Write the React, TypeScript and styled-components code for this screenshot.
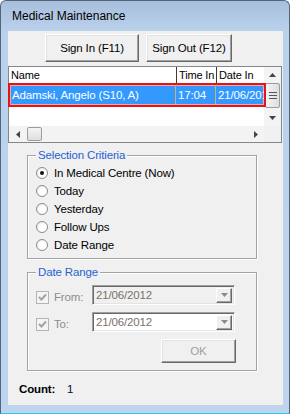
import React from 'react';
import styled, { createGlobalStyle } from 'styled-components';

// 선택 기준 라디오 목록
const CRITERIA = ['In Medical Centre (Now)', 'Today', 'Yesterday', 'Follow Ups', 'Date Range'];

const GlobalStyle = createGlobalStyle`
    html, body {
        margin: 0;
        padding: 0;
        background: #ffffff;
    }
    body {
        font-family: "Liberation Sans", Arial, sans-serif;
        font-size: 11px;
        letter-spacing: -0.15px;
        color: #000;
    }
`;

const UpArrow = () => (
    <svg width="7" height="4" viewBox="0 0 7 4">
        <path d="M0 4 L3.5 0 L7 4 Z" fill="#444" />
    </svg>
);

const DownArrow = ({ color = '#444' }: { color?: string }) => (
    <svg width="7" height="4" viewBox="0 0 7 4">
        <path d="M0 0 L7 0 L3.5 4 Z" fill={color} />
    </svg>
);

const LeftArrow = () => (
    <svg width="4" height="7" viewBox="0 0 4 7">
        <path d="M4 0 L4 7 L0 3.5 Z" fill="#444" />
    </svg>
);

const RightArrow = () => (
    <svg width="4" height="7" viewBox="0 0 4 7">
        <path d="M0 0 L4 3.5 L0 7 Z" fill="#444" />
    </svg>
);

const Grip = () => (
    <svg width="8" height="7" viewBox="0 0 8 7">
        <path d="M0 0.5 H8 M0 3.5 H8 M0 6.5 H8" stroke="#555" strokeWidth="1" />
    </svg>
);

const CheckMark = () => (
    <svg width="9" height="9" viewBox="0 0 9 9">
        <path d="M1 4 L3.5 6.5 L8 1.5" stroke="#a3a3a3" strokeWidth="2" fill="none" />
    </svg>
);

export default function App() {
    return (
        <>
            <GlobalStyle />
            <Window>
                <TitleBar>Medical Maintenance</TitleBar>
                <Middle>
                    <Client>
                        <ButtonRow>
                            <RaisedButton $width={94}>Sign In (F11)</RaisedButton>
                            <RaisedButton $width={86}>Sign Out (F12)</RaisedButton>
                        </ButtonRow>

                        <ListView>
                            <ListMain>
                                <HeaderRow>
                                    <HeaderCell $width={168}>Name</HeaderCell>
                                    <HeaderCell $width={40}>Time In</HeaderCell>
                                    <HeaderCell $width={60} $last>Date In</HeaderCell>
                                </HeaderRow>
                                <SelectedRow>
                                    <RowCell $width={166}>Adamski, Angelo (S10, A)</RowCell>
                                    <RowCell $width={40}>17:04</RowCell>
                                    <RowCell $width={60} $last>21/06/2012</RowCell>
                                </SelectedRow>
                            </ListMain>
                            <VScroll>
                                <ArrowBox $h={16}><UpArrow /></ArrowBox>
                                <VThumb><Grip /></VThumb>
                                <VTrack />
                                <ArrowBox $h={16}><DownArrow /></ArrowBox>
                            </VScroll>
                            <HScroll>
                                <ArrowBox $w={17}><LeftArrow /></ArrowBox>
                                <HThumb />
                                <HTrack />
                                <ArrowBox $w={17}><RightArrow /></ArrowBox>
                            </HScroll>
                            <Corner />
                        </ListView>

                        <GroupBox $top={12} $height={104}>
                            <Legend>Selection Critieria</Legend>
                            <RadioList>
                                {CRITERIA.map((label, i) => (
                                    <RadioRow key={label}>
                                        <RadioCircle>{i === 0 && <RadioDot />}</RadioCircle>
                                        <span>{label}</span>
                                    </RadioRow>
                                ))}
                            </RadioList>
                        </GroupBox>

                        <GroupBox $top={13} $height={99}>
                            <Legend>Date Range</Legend>
                            <DateRows>
                                <DateRow>
                                    <CheckBox><CheckMark /></CheckBox>
                                    <DateLabel>From:</DateLabel>
                                    <DatePicker $disabled>
                                        <DateText>21/06/2012</DateText>
                                        <DropButton><DownArrow color="#8a8a8a" /></DropButton>
                                    </DatePicker>
                                </DateRow>
                                <DateRow>
                                    <CheckBox><CheckMark /></CheckBox>
                                    <DateLabel>To:</DateLabel>
                                    <DatePicker>
                                        <DateText>21/06/2012</DateText>
                                        <DropButton><DownArrow color="#8a8a8a" /></DropButton>
                                    </DatePicker>
                                </DateRow>
                                <OkRow>
                                    <RaisedButton $width={75} $height={24} $disabled>OK</RaisedButton>
                                </OkRow>
                            </DateRows>
                        </GroupBox>

                        <CountRow>
                            <CountLabel>Count:</CountLabel>
                            <span>1</span>
                        </CountRow>
                    </Client>
                </Middle>
                <BottomFrame />
            </Window>
        </>
    );
}

// ===== 창 프레임 =====

const Window = styled.div`
    width: 290px;
    height: 414px;
    box-sizing: border-box;
    display: flex;
    flex-direction: column;
    border: 1px solid #52657a;
    border-bottom-color: #2fc4ee;
    border-radius: 6px 6px 0 0;
    background: linear-gradient(#a7bfdc 0px, #bad1ec 30px, #bed4ee 100%);
    overflow: hidden;
`;

const TitleBar = styled.div`
    height: 30px;
    padding-left: 11px;
    display: flex;
    align-items: center;
    font-size: 12px;
    letter-spacing: 0;
    color: #000;
    flex-shrink: 0;
`;

const Middle = styled.div`
    flex: 1;
    display: flex;
    padding: 0 6px 0 7px;
`;

const BottomFrame = styled.div`
    height: 8px;
    flex-shrink: 0;
`;

const Client = styled.div`
    flex: 1;
    background: #f0f0f0;
    display: flex;
    flex-direction: column;
`;

// ===== 버튼 =====

const ButtonRow = styled.div`
    display: flex;
    gap: 7px;
    margin-top: 3px;
    padding-left: 37px;
`;

const RaisedButton = styled.div<{ $width: number; $height?: number; $disabled?: boolean }>`
    width: ${(p) => p.$width}px;
    height: ${(p) => p.$height ?? 28}px;
    box-sizing: border-box;
    display: flex;
    align-items: center;
    justify-content: center;
    background: #f0f0f0;
    border: 1px solid;
    border-color: #ffffff #696969 #696969 #ffffff;
    box-shadow: inset -1px -1px 0 #a0a0a0, inset 1px 1px 0 #e3e3e3;
    font-size: 11.5px;
    color: ${(p) => (p.$disabled ? '#a0a0a0' : '#000')};
`;

// ===== 리스트뷰 =====

const ListView = styled.div`
    margin-top: 4px;
    width: 274px;
    height: 77px;
    box-sizing: border-box;
    border: 1px solid #828790;
    background: #ffffff;
    display: grid;
    grid-template-columns: 255px 17px;
    grid-template-rows: 59px 16px;
`;

const ListMain = styled.div`
    display: flex;
    flex-direction: column;
    overflow: visible;
    position: relative;
    z-index: 1;
`;

const HeaderRow = styled.div`
    display: flex;
    height: 16px;
    white-space: nowrap;
    overflow: hidden;
`;

const HeaderCell = styled.div<{ $width: number; $last?: boolean }>`
    width: ${(p) => p.$width}px;
    flex-shrink: 0;
    box-sizing: border-box;
    padding-left: 2px;
    line-height: 17px;
    border-right: ${(p) => (p.$last ? 'none' : '1px solid #3a3a3a')};
`;

const SelectedRow = styled.div`
    display: flex;
    height: 24px;
    margin-left: -1px;
    width: 258px;
    box-sizing: border-box;
    border: 2px solid #e4141c;
    box-shadow: inset 0 0 0 1px #f3a6a6;
    background: #3399ff;
    color: #ffffff;
    white-space: nowrap;
    overflow: hidden;
`;

const RowCell = styled.div<{ $width: number; $last?: boolean }>`
    width: ${(p) => p.$width}px;
    flex-shrink: 0;
    box-sizing: border-box;
    padding-left: 2px;
    line-height: 20px;
    font-size: 11.5px;
    border-right: ${(p) => (p.$last ? 'none' : '1px solid #c9ae86')};
`;

const VScroll = styled.div`
    display: flex;
    flex-direction: column;
    background: #f3f3f3;
`;

const HScroll = styled.div`
    display: flex;
    background: #f3f3f3;
`;

const Corner = styled.div`
    background: #f0f0f0;
`;

const ArrowBox = styled.div<{ $h?: number; $w?: number }>`
    ${(p) => (p.$h ? `height: ${p.$h}px;` : '')}
    ${(p) => (p.$w ? `width: ${p.$w}px;` : '')}
    flex-shrink: 0;
    display: flex;
    align-items: center;
    justify-content: center;
`;

const VThumb = styled.div`
    height: 25px;
    margin: 0 1px;
    box-sizing: border-box;
    border: 1px solid #9c9c9c;
    border-radius: 2px;
    background: linear-gradient(90deg, #f4f4f4, #dedede);
    display: flex;
    align-items: center;
    justify-content: center;
`;

const VTrack = styled.div`
    flex: 1;
`;

const HThumb = styled.div`
    width: 15px;
    margin: 1px 0 1px 1px;
    box-sizing: border-box;
    border: 1px solid #9c9c9c;
    border-radius: 2px;
    background: linear-gradient(#f4f4f4, #dedede);
`;

const HTrack = styled.div`
    flex: 1;
`;

// ===== 그룹박스 =====

const GroupBox = styled.div<{ $top: number; $height: number }>`
    position: relative;
    margin-top: ${(p) => p.$top}px;
    margin-left: 19px;
    width: 230px;
    height: ${(p) => p.$height}px;
    box-sizing: border-box;
    border: 1px solid #a3a3a3;
    box-shadow: 1px 1px 0 #ffffff, inset 1px 1px 0 #ffffff;
`;

const Legend = styled.div`
    position: absolute;
    top: -8px;
    left: 8px;
    padding: 0 2px;
    background: #f0f0f0;
    color: #1f62d2;
    font-size: 11.5px;
    line-height: 14px;
`;

const RadioList = styled.div`
    display: flex;
    flex-direction: column;
    padding: 8px 0 0 8px;
`;

const RadioRow = styled.div`
    display: flex;
    align-items: center;
    gap: 6px;
    height: 18px;
    font-size: 11.5px;
`;

const RadioCircle = styled.div`
    width: 12px;
    height: 12px;
    box-sizing: border-box;
    border-radius: 50%;
    border: 1px solid #8c8c8c;
    background: radial-gradient(circle at 60% 60%, #ffffff 40%, #e2e2e2 100%);
    display: flex;
    align-items: center;
    justify-content: center;
`;

const RadioDot = styled.div`
    width: 4px;
    height: 4px;
    border-radius: 50%;
    background: #111;
`;

const DateRows = styled.div`
    display: flex;
    flex-direction: column;
    gap: 7px;
    padding: 12px 0 0 8px;
`;

const DateRow = styled.div`
    display: flex;
    align-items: center;
    height: 20px;
`;

const CheckBox = styled.div`
    width: 13px;
    height: 13px;
    box-sizing: border-box;
    border: 1px solid #b4b4b4;
    background: #f4f4f4;
    display: flex;
    align-items: center;
    justify-content: center;
    margin-top: 5px;
`;

const DateLabel = styled.div`
    width: 38px;
    margin-left: 5px;
    color: #8d8d8d;
    margin-top: 3px;
    font-size: 11.5px;
`;

const DatePicker = styled.div<{ $disabled?: boolean }>`
    width: 143px;
    height: 20px;
    box-sizing: border-box;
    display: flex;
    align-items: center;
    border: 1px solid;
    border-color: #a0a0a0 #ffffff #ffffff #a0a0a0;
    box-shadow: inset 1px 1px 0 #696969, inset -1px -1px 0 #e3e3e3;
    background: ${(p) => (p.$disabled ? '#f0f0f0' : '#ffffff')};
    padding: 2px;
`;

const DateText = styled.div`
    flex: 1;
    padding-left: 1px;
    color: #7a7068;
    font-size: 11.5px;
`;

const DropButton = styled.div`
    width: 16px;
    height: 15px;
    box-sizing: border-box;
    display: flex;
    align-items: center;
    justify-content: center;
    background: #f0f0f0;
    border: 1px solid;
    border-color: #ffffff #696969 #696969 #ffffff;
    box-shadow: inset -1px -1px 0 #a0a0a0;
`;

const OkRow = styled.div`
    display: flex;
    padding-left: 125px;
`;

const CountRow = styled.div`
    display: flex;
    margin: 11px 0 0 11px;
    line-height: 14px;
    font-size: 11.5px;
    color: #0a0a30;
`;

const CountLabel = styled.div`
    width: 48px;
    font-weight: bold;
    color: #000;
`;
